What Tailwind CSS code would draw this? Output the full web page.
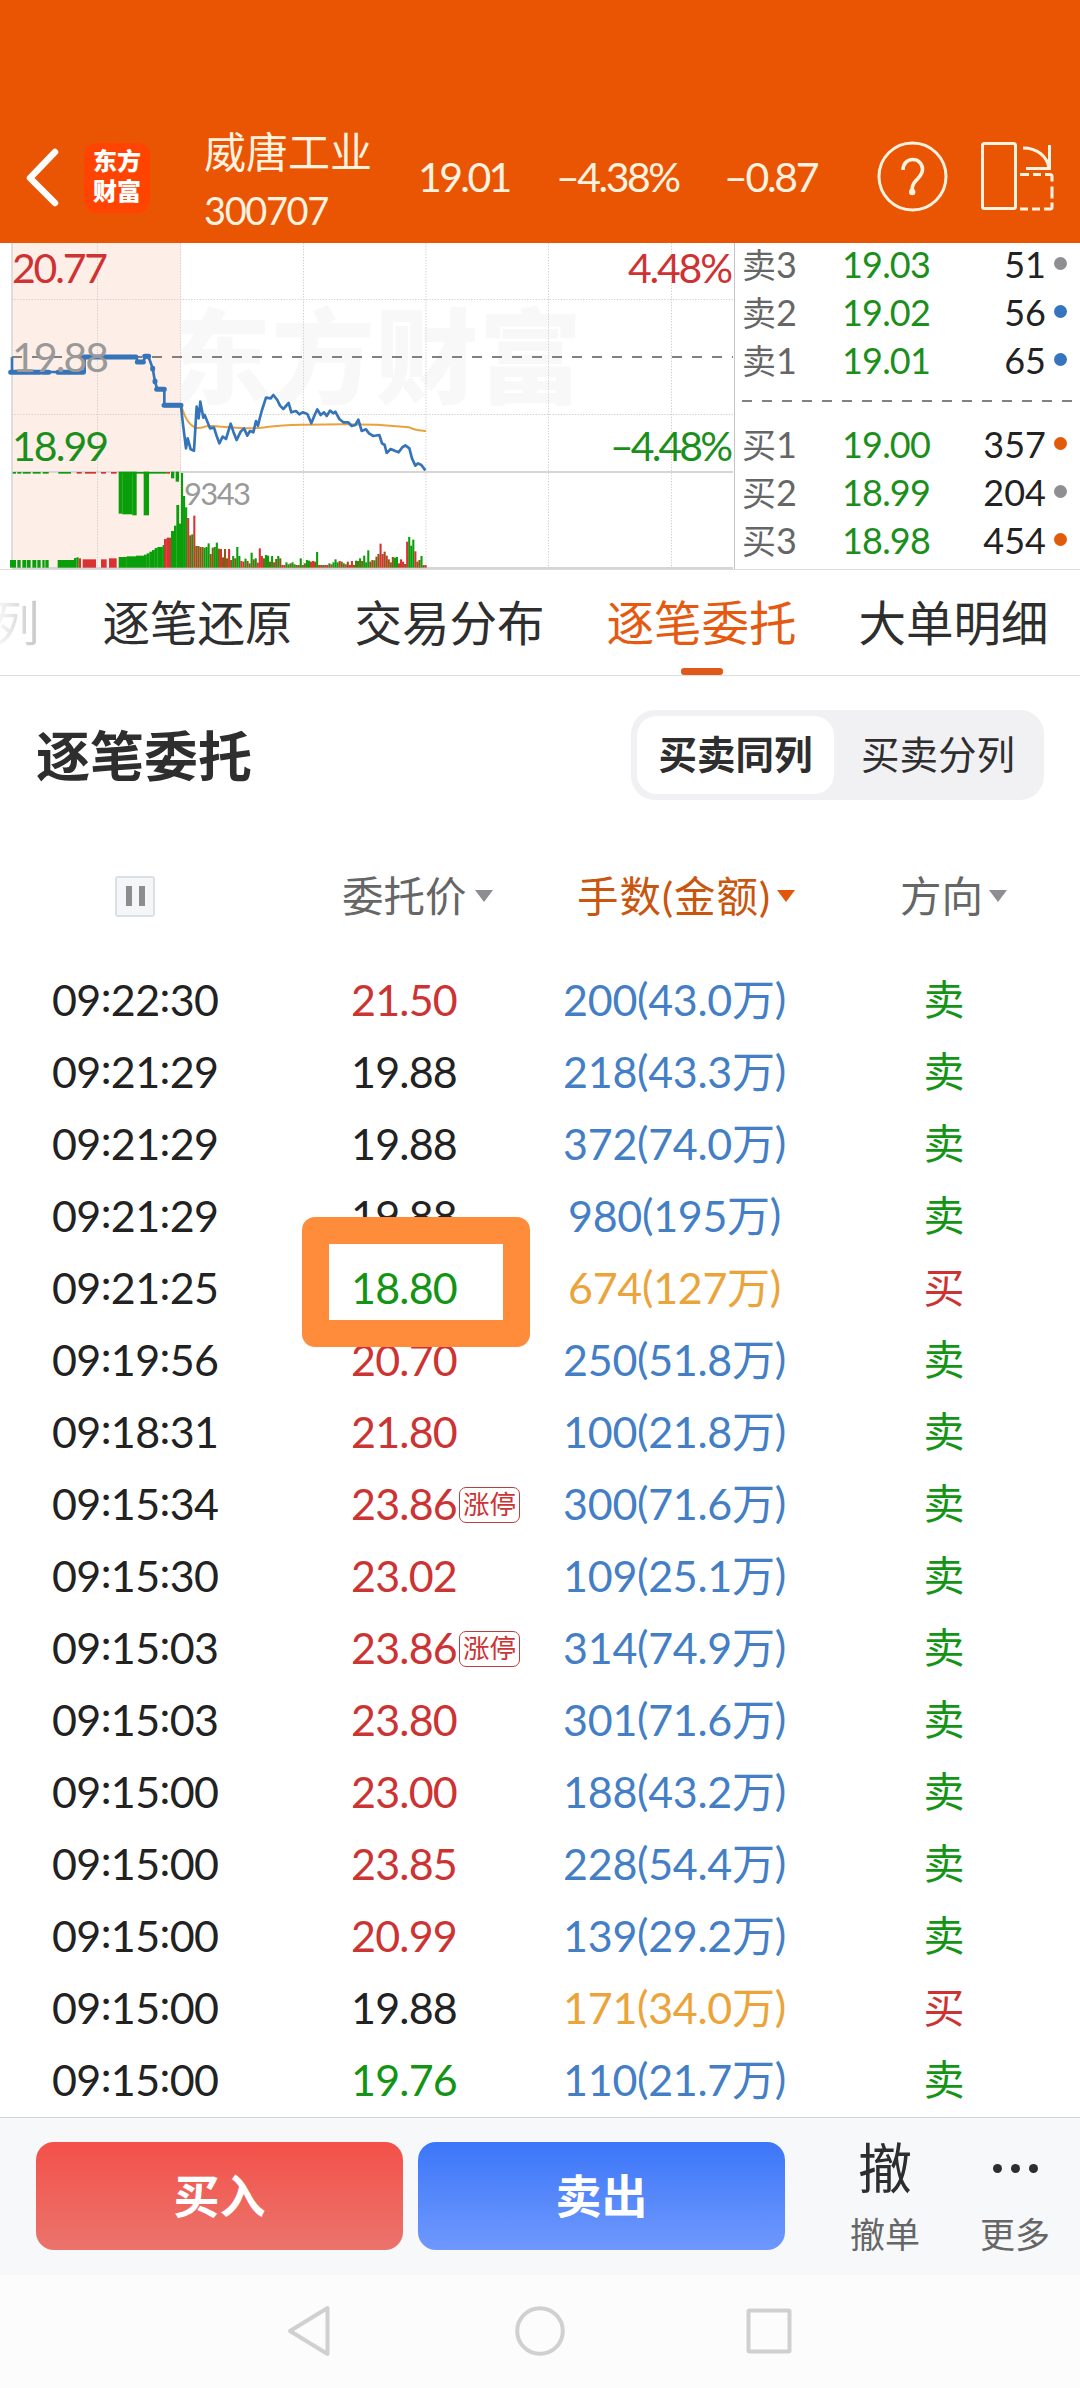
<!DOCTYPE html>
<html lang="zh-CN">
<head>
<meta charset="utf-8">
<title>威唐工业 300707</title>
<script src="https://cdn.jsdelivr.net/npm/@tailwindcss/browser@4"></script>
</head>
<body class="w-[1080px] h-[2388px] overflow-hidden bg-white font-[Lato,'Noto_Sans_CJK_SC',sans-serif] text-[#222] whitespace-nowrap">
<div class="relative flex flex-col h-[2388px]">

<!-- Stock header -->
<header class="h-[243px] shrink-0 bg-[#ea5504] pt-[110px] text-[#fff3e0]">
  <div class="flex h-[133px] items-center">
    <svg class="ml-[24px] w-[36px] h-[60px] shrink-0" viewBox="0 0 36 60" fill="none" stroke="#fff" stroke-width="6.500" stroke-linecap="round" stroke-linejoin="round"><path d="M31 5 6 31 31 56"/></svg>
    <div class="ml-[24px] mt-[3px] w-[66px] h-[70px] rounded-[13px] bg-[#ff4401] text-white font-black text-[24px] leading-[30px] text-center pt-[3px]">东方<br>财富</div>
    <div class="ml-[54px] w-[214px]">
      <div class="text-[42px] leading-[50px] mt-[2px]">威唐工业</div>
      <div class="text-[38px] leading-[38px] mt-[14px] tracking-[-1.4px]">300707</div>
    </div>
    <div class="w-[138px] text-[41px] tracking-[-2.6px]">19.01</div>
    <div class="w-[168px] text-[41px] tracking-[-2.500px]">–4.38%</div>
    <div class="w-[151px] text-[41px] tracking-[-2.300px]">–0.87</div>
    <svg class="w-[190px] h-[80px] shrink-0 -mt-[2px]" viewBox="876 137 190 80" fill="none" stroke="#fff3e0" stroke-width="3">
      <circle cx="913.5" cy="177.5" r="33.5"/>
      <path d="M904 171c0-6 4-10.500 9.800-10.500s9.700 4.500 9.700 9.700c0 4.500-2.500 7-5 9.800-3 3-5.300 5-5.300 9.500v1.500" stroke-width="3.6"/>
      <circle cx="913.200" cy="193" r="3.200" fill="#fff3e0" stroke="none"/>
      <rect x="983.500" y="144.500" width="33" height="65" rx="2"/>
      <path d="M1021 175.500h9m4 0h8m4 0h5q2 0 2 2v5m0 5v12m0 4v5q0 1.500-2 1.500h-6m-4 0h-8m-4 0h-8"/>
      <path d="M1024 149c14 0 24 8 26 20m.5-23v23.500h-23.500"/>
    </svg>
  </div>
</header>

<!-- Intraday chart and order book -->
<section class="flex h-[327px] shrink-0 border-b border-[#dcdcdc] overflow-hidden">
  <svg class="w-[735px] h-[327px] shrink-0" viewBox="0 0 735 327" id="chart">
    <rect x="12" y="0" width="169" height="324" fill="#fdeee8"/>
    <text x="168" y="153" font-size="103" font-weight="900" fill="#f8f8f8" textLength="414" font-family="Noto Sans CJK SC">东方财富</text>
    <rect x="166" y="50" width="14.500" height="120" fill="#fdeee8"/>
    <g stroke="#cfcfcf" stroke-dasharray="1.300 1.500" fill="none">
      <path d="M97.500 0V324M180.500 0V324M303.500 0V324M426 0V324M548.500 0V324M671.500 0V324M12 56.500H733M12 171.500H733"/>
    </g>
    <path d="M12 0V324" stroke="#d4d4d4" stroke-width="1.500"/>
    <path d="M12 229H733M12 325H733" stroke="#d6d6d6" stroke-width="2"/>
    <path d="M734.500 0V326" stroke="#c4c4c4"/>
    <path d="M12 114H733" stroke="#808080" stroke-width="2" stroke-dasharray="10 10"/>
    <g id="bars" transform="translate(0 -8) scale(.33333)"></g>
    <g transform="translate(0 -8) scale(.33333)" fill="none" stroke-linejoin="round">
      <path d="M543 510C552 535 560 570 590 579C620 580 600 572 640 573C700 577 760 585 800 576C850 570 880 570 920 569C1000 567 1060 567 1130 569C1170 572 1200 575 1228 577C1245 586 1260 586 1278 588" stroke="#e8a340" stroke-width="6"/>
      <path d="M36 367V411H254V366H408L414 381H428L438 364L448 372L458 400L465 440L472 463H493V513H543L548 560L558 640L563 610L572 643L582 647L590 515L596 550L601 500L610 548L614 540L630 580L642 578L650 603L658 625L668 605L678 612L692 566L700 590L710 615L722 590L732 580L742 602L750 588L760 592L768 558L774 572L778 555L786 525L798 488L812 490L820 480L832 495L840 512L850 522L866 504L874 532L888 528L898 538L908 532L922 537L934 565L944 540L952 523L962 540L972 532L980 543L990 527L1000 535L1006 530L1018 552L1030 562L1045 562L1055 573L1066 570L1075 554L1085 588L1098 583L1107 595L1120 603L1138 600L1146 625L1154 630L1160 654L1172 642L1186 648L1196 652L1206 638L1216 631L1228 640L1236 670L1246 692L1254 685L1264 690L1276 706" stroke="#3674b9" stroke-width="8"/>
      <path d="M32 412H52M58 412H92M98 412H120M128 412H146M174 412H250M252 366H408M412 381H430M434 364H446M458 400V402M465 438V440M470 463H493M492 511H543" stroke="#3674b9" stroke-width="15" stroke-linecap="round"/>
    </g>
    <g font-family="Lato" font-size="41">
      <text x="12" y="40" textLength="96" fill="#cf3232">20.77</text>
      <text x="12" y="129" textLength="97" fill="#999">19.88</text>
      <text x="12" y="218" textLength="97" fill="#1b8f1b">18.99</text>
      <text x="628" y="40" textLength="105" fill="#cf3232">4.48%</text>
      <text x="610" y="218" textLength="123" fill="#1b8f1b">–4.48%</text>
      <text x="184" y="261.500" textLength="67" font-size="31" fill="#999">9343</text>
    </g>
  </svg>
  <div class="w-[345px] text-[36px] leading-[48px] mt-[-3px]">
    <div id="asks"></div>
    <div class="h-[36px] pt-[16px]"><svg class="block ml-[7px]" width="331" height="2"><path d="M0 1H331" stroke="#808080" stroke-width="2" stroke-dasharray="10 10"/></svg></div>
    <div id="bids"></div>
  </div>
</section>

<!-- Tabs -->
<nav class="relative flex h-[106px] shrink-0 border-b border-[#dedede] text-[47.500px] leading-[105px] text-[#2e2e2e] overflow-hidden">
  <span class="w-[102.500px] shrink-0 bg-linear-to-r from-[#f4f4f4] to-[#c4c4c4] from-0% to-[40px] bg-clip-text text-transparent"><span class="-ml-[8px]">列</span></span>
  <span class="w-[252px] shrink-0">逐笔还原</span>
  <span class="w-[252px] shrink-0">交易分布</span>
  <span class="w-[252px] shrink-0 text-[#e55a10]">逐笔委托</span>
  <span class="w-[221px] shrink-0">大单明细</span>
  <i class="absolute left-[681px] bottom-0 w-[42px] h-[7px] rounded-[3px] bg-[#e0591a]"></i>
</nav>

<!-- Title and view toggle -->
<div class="flex h-[124px] shrink-0 items-end justify-between pl-[36px] pr-[36px]">
  <h1 class="text-[54px] leading-[86px] font-bold text-[#2e2e2e]">逐笔委托</h1>
  <div class="flex w-[413px] h-[90px] p-[6px] rounded-[24px] bg-[#f1f1f4] text-[38.500px] leading-[76px] text-center text-[#2e2e2e]">
    <div class="w-[197px] h-[78px] rounded-[20px] bg-white font-bold">买卖同列</div>
    <div class="flex-1 pl-[4px]">买卖分列</div>
  </div>
</div>

<!-- Column headings -->
<div class="flex h-[165px] shrink-0 items-center text-[41.500px] text-[#666] pt-[27px]">
  <div class="ml-[115px] w-[40px] h-[41px] rounded-[3px] border-2 border-[#dcdfe3] bg-[#f5f6f8] flex items-center justify-center gap-[7px]"><i class="w-[6px] h-[20px] bg-[#8d8d90]"></i><i class="w-[6px] h-[20px] bg-[#8d8d90]"></i></div>
  <div class="ml-[187px] w-[235px] flex items-center leading-[60px]">委托价<svg class="ml-[8px]" width="18" height="13"><path d="M0 0h18l-9 12z" fill="#8d8d92"/></svg></div>
  <div class="w-[323px] flex items-center leading-[60px] text-[#c9560f]"><span class="tracking-[1px]">手数(金额)</span><svg class="ml-[6px]" width="18" height="13"><path d="M0 0h18l-9 12z" fill="#e0570c"/></svg></div>
  <div class="flex items-center leading-[60px]">方向<svg class="ml-[6px]" width="18" height="13"><path d="M0 0h18l-9 12z" fill="#8d8d92"/></svg></div>
</div>

<!-- Order rows -->
<main class="h-[1152px] shrink-0 text-[43px] leading-[72px] -mt-[1px]" id="rows"></main>

<!-- Trade bar -->
<footer class="mt-[1px] flex h-[158px] shrink-0 border-t border-[#cfd4d9] bg-[#f6f8fa] pt-[24px] pl-[36px] overflow-hidden">
  <div class="w-[367px] h-[108px] rounded-[18px] bg-linear-to-b from-[#f35049] to-[#ea736c] text-white text-[46px] leading-[108px] font-bold text-center">买入</div>
  <div class="ml-[15px] w-[367px] h-[108px] rounded-[18px] bg-linear-to-b from-[#3b76f8] to-[#6f98fd] text-white text-[46px] leading-[108px] font-bold text-center">卖出</div>
  <div class="ml-[60px] w-[80px] text-center text-[#2e2e2e]">
    <div class="text-[54px] leading-[53px] h-[74px]">撤</div>
    <div class="text-[35px] leading-[36px] text-[#666]">撤单</div>
  </div>
  <div class="ml-[50px] w-[80px] text-center">
    <div class="flex h-[74px] pt-[22px] justify-center gap-[9px]"><i class="size-[9px] rounded-full bg-[#2e2e2e]"></i><i class="size-[9px] rounded-full bg-[#2e2e2e]"></i><i class="size-[9px] rounded-full bg-[#2e2e2e]"></i></div>
    <div class="text-[35px] leading-[36px] text-[#666]">更多</div>
  </div>
</footer>

<!-- System navigation -->
<div class="flex-1 bg-[#fcfcfc]">
  <svg class="w-[1080px] h-[113px] block" viewBox="0 2275 1080 113" fill="none" stroke="#d0d0d0" stroke-width="4" stroke-linejoin="round">
    <path d="M327.500 2308V2354L290 2331Z"/><circle cx="540" cy="2331" r="22.800"/><rect x="748.500" y="2310.500" width="41" height="41" rx="1"/>
  </svg>
</div>

<!-- Highlight marker around the 18.80 order -->
<div class="absolute left-[302px] top-[1217px] w-[228px] h-[130px] rounded-[13px] border-[27px] border-[#ff8c3b]"></div>
</div>

<script>
const RED='text-[#cc3333]', GREEN='text-[#149414]', BLACK='text-[#222]';
const orders=[
['09:22:30','21.50',RED,'200(43.0万)',0],['09:21:29','19.88',BLACK,'218(43.3万)',0],
['09:21:29','19.88',BLACK,'372(74.0万)',0],['09:21:29','19.88',BLACK,'980(195万)',0],
['09:21:25','18.80',GREEN,'674(127万)',1],['09:19:56','20.70',RED,'250(51.8万)',0],
['09:18:31','21.80',RED,'100(21.8万)',0],['09:15:34','23.86',RED,'300(71.6万)',0,1],
['09:15:30','23.02',RED,'109(25.1万)',0],['09:15:03','23.86',RED,'314(74.9万)',0,1],
['09:15:03','23.80',RED,'301(71.6万)',0],['09:15:00','23.00',RED,'188(43.2万)',0],
['09:15:00','23.85',RED,'228(54.4万)',0],['09:15:00','20.99',RED,'139(29.2万)',0],
['09:15:00','19.88',BLACK,'171(34.0万)',1],['09:15:00','19.76',GREEN,'110(21.7万)',0]];
document.getElementById('rows').innerHTML=orders.map(([t,p,c,q,buy,lim])=>`
<div class="flex h-[72px]">
  <div class="pl-[52px] w-[404px] shrink-0 tracking-[-0.6px]">${t.replace(/:/g,'<span class="relative -top-[4px]">:</span>')}</div>
  <div class="w-0 flex justify-center ${c}"><span class="relative tracking-[-0.8px]">${p}${lim?'<b class="absolute left-full top-[19px] ml-[2px] w-[61px] h-[36px] rounded-[7px] border border-[#b94040] text-[26.500px] leading-[32px] text-center tracking-normal font-normal">涨停</b>':''}</span></div>
  <div class="w-[541px] shrink-0 text-center tracking-[-0.3px] ${buy?'text-[#eba43a]':'text-[#447fc6]'}">${q.replace(/[()]/g,'<span class="relative -top-[2px]">$&</span>')}</div>
  <div class="w-[102px] shrink-0 text-center text-[41px] -ml-[52px] ${buy?'text-[#cc3333]':'text-[#149414]'}">${buy?'买':'卖'}</div>
</div>`).join('');

const book=(id,list)=>document.getElementById(id).innerHTML=list.map(([n,p,v,c])=>`
<div class="flex h-[48px] items-center">
  <div class="pl-[7px] w-[107px] text-[#666]"><span class="text-[34px]">${n[0]}</span>${n[1]}</div>
  <div class="w-[101px] text-[#1b8f1b] tracking-[-0.8px]">${p}</div>
  <div class="w-[103px] text-right">${v}</div>
  <i class="ml-[8px] mb-[2px] size-[13px] rounded-full ${c}"></i>
</div>`).join('');
const G='bg-[#8e8e93]',B='bg-[#3674bd]',O='bg-[#e25a0c]';
book('asks',[['卖3','19.03',51,G],['卖2','19.02',56,B],['卖1','19.01',65,B]]);
book('bids',[['买1','19.00',357,O],['买2','18.99',204,G],['买3','18.98',454,O]]);

// Volume bars: one per minute, top coordinate and colour (g/r/b = down/up/mixed)
const vol='g714 g783 g817 r849 b901 g898 r842 b933 b933 b936 b936 g938 g936 g925 b957 b938 g936 g923 b941 r942 b967 b942 b970 r942 b975 g963 b970 g936 g963 r978 r980 g971 b978 b985 g953 b973 g970 r983 r940 r963 b970 g960 g962 b980 g963 b982 b972 g963 b970 r990 r990 g982 g988 b985 g982 g988 b990 b990 g970 b990 b985 g975 g977 r980 r978 b980 g951 r990 r990 g990 r990 r990 g985 r988 g982 g973 g982 r978 b980 g985 r988 b980 r990 r978 b990 g977 b978 g970 b978 g962 g982 g946 b980 r975 g976 b965 b957 r926 r957 b950 r962 b973 b982 b966 g968 g966 r985 r973 r980 b987 r920 g906 g932 g914 r949 b980 b975 g963 b990 r990'.split(' ');
const col={g:'#0a9e0a',r:'#d93232',b:'#8a5a14'};
let s='';
const bar=(x,y,x2,y2,c)=>{s+=`<rect x="${x}" y="${y}" width="${x2-x}" height="${y2-y}" fill="${col[c]}"/>`};
vol.forEach((v,i)=>bar(543+i*6.14,+v.slice(1),543+i*6.14+6.3,998,v[0]));
[[30,48],[52,62],[67,78],[80,92],[97,109],[112,122],[127,134],[136,146],[173,222]].forEach(a=>bar(a[0],975,a[1],998,'g'));
[[222,969,229,'g'],[229,967,236,'g'],[236,970,243,'r'],[248,973,288,'r'],[303,973,320,'r'],[327,970,350,'r'],[356,966,380.5,'g'],[380,964,408.5,'g'],[408,962,432.5,'g'],[432,959,440.5,'g'],[440,955,448.5,'g'],[448,950,456.5,'g'],[456,945,464.5,'g'],[464,939,472.5,'g'],[472,936,488.5,'g'],[488,930,494,'g'],[492,912,500.5,'r'],[500,908,514,'r'],[513,888,522.5,'g'],[522,872,529.5,'g'],[529,810,537.5,'g'],[537,866,544,'g']].forEach(a=>bar(a[0],a[1],a[2],998,a[3]));
[[38,48],[52,64],[68,92],[98,122],[128,146],[175,213],[366,500]].forEach(a=>bar(a[0],711,a[1],716,'g'));
[[230,245],[255,288],[303,318],[333,350],[500,510]].forEach(a=>bar(a[0],711,a[1],716,'r'));
bar(356,710,367.5,836,'g');bar(367,710,397.5,838,'g');bar(397,710,410,841,'g');bar(431,710,447,841,'g');bar(513,710,523,730,'g');bar(527,710,537,740,'g');
document.getElementById('bars').innerHTML=s;
</script>
</body>
</html>
